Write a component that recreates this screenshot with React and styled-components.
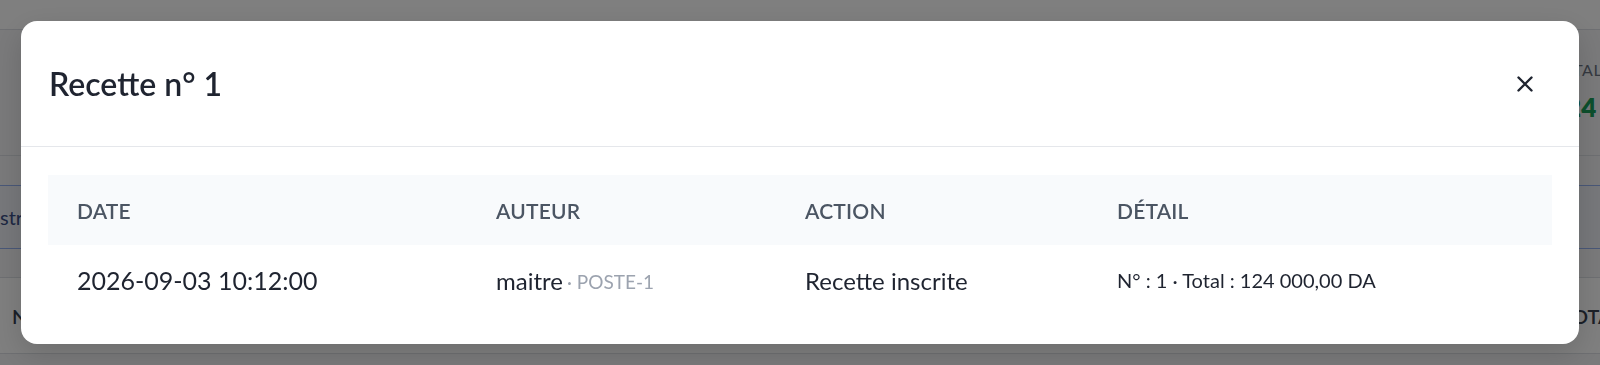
import React from 'react'
import { styled, createGlobalStyle } from 'styled-components'

const GlobalStyle = createGlobalStyle`
  html, body {
    margin: 0;
    padding: 0;
    width: 1600px;
    height: 365px;
    overflow: hidden;
    font-family: Lato, "Noto Sans", "Liberation Sans", sans-serif;
    background: #f4f5f7;
  }
`

const columns = ['Date', 'Auteur', 'Action', 'Détail']

const rows = [
  {
    date: '2026-09-03 10:12:00',
    author: 'maitre',
    poste: 'POSTE-1',
    action: 'Recette inscrite',
    detail: 'N° : 1 · Total : 124 000,00 DA',
  },
]

function App() {
  return (
    <>
      <GlobalStyle />
      {/* page behind the dialog */}
      <Page>
        <TopBar />
        <StatsRow>
          <StatBlock>
            <StatLabel>TOTAL</StatLabel>
            <StatValue>124 000,00 DA</StatValue>
          </StatBlock>
        </StatsRow>
        <Banner>
          <BannerText>stricte</BannerText>
        </Banner>
        <PageTableHead>
          <PageTh>N°</PageTh>
          <PageTh $right>TOTAL</PageTh>
        </PageTableHead>
      </Page>

      <Overlay>
        <Modal>
          <ModalHeader>
            <ModalTitle>Recette n° 1</ModalTitle>
            <CloseButton aria-label="Fermer">
              <svg width="16" height="16" viewBox="0 0 16 16" fill="none">
                <path d="M1.5 1.5 L14.5 14.5 M14.5 1.5 L1.5 14.5" stroke="#1f2430" strokeWidth="2.4" strokeLinecap="round" />
              </svg>
            </CloseButton>
          </ModalHeader>
          <ModalBody>
            <Table>
              <HeadRow>
                {columns.map((c) => (
                  <HeadCell key={c}>{c}</HeadCell>
                ))}
              </HeadRow>
              {rows.map((r, i) => (
                <BodyRow key={i}>
                  <Cell $large>{r.date}</Cell>
                  <Cell>
                    {r.author}
                    <Muted> · {r.poste}</Muted>
                  </Cell>
                  <Cell>{r.action}</Cell>
                  <Cell $small>{r.detail}</Cell>
                </BodyRow>
              ))}
            </Table>
          </ModalBody>
        </Modal>
      </Overlay>
    </>
  )
}

export default App

const Page = styled.div`
  width: 1600px;
  height: 365px;
  display: flex;
  flex-direction: column;
  overflow: hidden;
`

const TopBar = styled.div`
  height: 29px;
  background: #ffffff;
  border-bottom: 1px solid #dcdfe4;
`

const StatsRow = styled.div`
  height: 125px;
  display: flex;
  justify-content: flex-end;
  border-bottom: 1px solid #dcdfe4;
  margin-bottom: 29px;
`

const StatBlock = styled.div`
  width: 49px;
  padding-top: 30px;
  white-space: nowrap;
`

const StatLabel = styled.div`
  font-size: 16px;
  color: #6b7280;
  letter-spacing: 0.5px;
  line-height: 20px;
`

const StatValue = styled.div`
  margin-top: 12px;
  font-size: 26px;
  font-weight: 800;
  color: #1a9f5a;
  line-height: 30px;
`

const Banner = styled.div`
  height: 62px;
  display: flex;
  align-items: center;
  background: #eef1f6;
  border-top: 1px solid #93b0f0;
  border-bottom: 1px solid #93b0f0;
  margin-bottom: 28px;
`

const BannerText = styled.span`
  font-size: 20px;
  color: #3b4f86;
`

const PageTableHead = styled.div`
  height: 75px;
  display: flex;
  align-items: center;
  justify-content: space-between;
  padding-left: 12px;
  border-top: 1px solid #dcdfe4;
  border-bottom: 1px solid #dcdfe4;
  background: #ffffff;
`

const PageTh = styled.span`
  font-size: 20px;
  font-weight: 600;
  color: #374151;
  margin-right: ${(p) => (p.$right ? '-22px' : '0')};
`

const Overlay = styled.div`
  position: fixed;
  inset: 0;
  background: rgba(0, 0, 0, 0.5);
  padding: 21px;
  box-sizing: border-box;
`

const Modal = styled.div`
  background: #ffffff;
  border-radius: 16px;
  box-shadow: 0 10px 30px rgba(0, 0, 0, 0.15);
  overflow: hidden;
  height: 323px;
  display: flex;
  flex-direction: column;
`

const ModalHeader = styled.div`
  height: 125px;
  flex-shrink: 0;
  display: flex;
  align-items: center;
  justify-content: space-between;
  padding: 0 46px 0 28px;
  border-bottom: 1px solid #e5e7eb;
`

const ModalTitle = styled.h2`
  margin: 0;
  font-size: 32px;
  font-weight: 600;
  color: #1f2430;
`

const CloseButton = styled.button`
  border: none;
  background: none;
  padding: 0;
  width: 16px;
  height: 16px;
  display: flex;
  cursor: pointer;
`

const ModalBody = styled.div`
  padding: 28px 27px;
`

const Table = styled.div`
  display: grid;
  grid-template-columns: 419px 309px 312px 1fr;
`

const HeadRow = styled.div`
  display: contents;
  & > * {
    background: #f8fafc;
  }
`

const HeadCell = styled.div`
  height: 70px;
  display: flex;
  align-items: center;
  padding-left: 29px;
  font-size: 21px;
  font-weight: 600;
  text-transform: uppercase;
  color: #4b5563;
  letter-spacing: 0.2px;
`

const BodyRow = styled.div`
  display: contents;
`

const Cell = styled.div`
  height: 70px;
  display: flex;
  align-items: center;
  padding-left: 29px;
  font-size: ${(p) => (p.$small ? '20px' : p.$large ? '25px' : '24px')};
  color: #1f2430;
  white-space: nowrap;
`

const Muted = styled.span`
  font-size: 19px;
  color: #9ca3af;
  margin-left: 4px;
  align-self: center;
  padding-top: 2px;
`
